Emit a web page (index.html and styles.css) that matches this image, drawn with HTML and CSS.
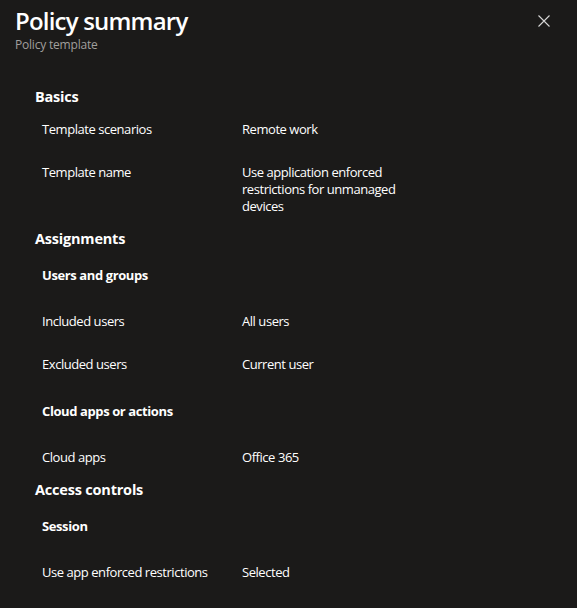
FILE: index.html
```html
<!DOCTYPE html>
<html lang="en">
<head>
<meta charset="utf-8">
<title>Policy summary</title>
<link rel="stylesheet" href="styles.css">
</head>
<body>
<div class="panel">
  <header class="panel-header">
    <div class="titles">
      <h1 class="title">Policy summary</h1>
      <div class="subtitle">Policy template</div>
    </div>
    <button class="close" aria-label="Close">
      <svg width="12" height="12" viewBox="0 0 12 12"><path d="M0.5 0.5 L11.5 11.5 M11.5 0.5 L0.5 11.5" stroke="#d6d6d6" stroke-width="1.1" fill="none"/></svg>
    </button>
  </header>
  <main class="content">
    <h2 class="section">Basics</h2>
    <div class="row"><div class="label">Template scenarios</div><div class="value">Remote work</div></div>
    <div class="row"><div class="label">Template name</div><div class="value">Use application enforced restrictions for unmanaged devices</div></div>

    <h2 class="section">Assignments</h2>
    <h3 class="sub">Users and groups</h3>
    <div class="row"><div class="label">Included users</div><div class="value">All users</div></div>
    <div class="row"><div class="label">Excluded users</div><div class="value">Current user</div></div>
    <h3 class="sub">Cloud apps or actions</h3>
    <div class="row"><div class="label">Cloud apps</div><div class="value">Office 365</div></div>

    <h2 class="section">Access controls</h2>
    <h3 class="sub">Session</h3>
    <div class="row"><div class="label">Use app enforced restrictions</div><div class="value">Selected</div></div>
  </main>
</div>
</body>
</html>
```
FILE: styles.css
```css
html, body {
  margin: 0;
  padding: 0;
  background: #1b1a19;
}
body {
  font-family: "Open Sans", "Noto Sans", sans-serif;
  color: #ffffff;
  font-size: 13px;
}
.panel {
  width: 577px;
  height: 608px;
  background: #1b1a19;
}
.panel-header {
  display: flex;
  justify-content: space-between;
  align-items: flex-start;
  padding: 5px 27px 0 15px;
}
.title {
  margin: 0;
  font-size: 24px;
  font-weight: 600;
  letter-spacing: -0.8px;
  line-height: 32px;
  color: #ffffff;
}
.subtitle {
  font-size: 12px;
  line-height: 16px;
  color: #a19f9d;
  letter-spacing: -0.2px;
}
.close {
  background: none;
  border: 0;
  padding: 0;
  margin-top: 10px;
  width: 12px;
  height: 12px;
  display: flex;
}
.content {
  padding: 33px 0 0 35px;
}
.section {
  margin: 0;
  font-size: 14.5px;
  font-weight: 700;
  letter-spacing: -0.2px;
  line-height: 22px;
}
.sub {
  margin: 0;
  padding: 15px 0 15px 7px;
  font-size: 13px;
  font-weight: 700;
  letter-spacing: -0.4px;
  line-height: 20px;
}
.row {
  display: grid;
  grid-template-columns: 200px 175px;
  padding: 13px 0 13px 7px;
  line-height: 17px;
  letter-spacing: -0.45px;
}
.label, .value {
  color: #ffffff;
}
```
